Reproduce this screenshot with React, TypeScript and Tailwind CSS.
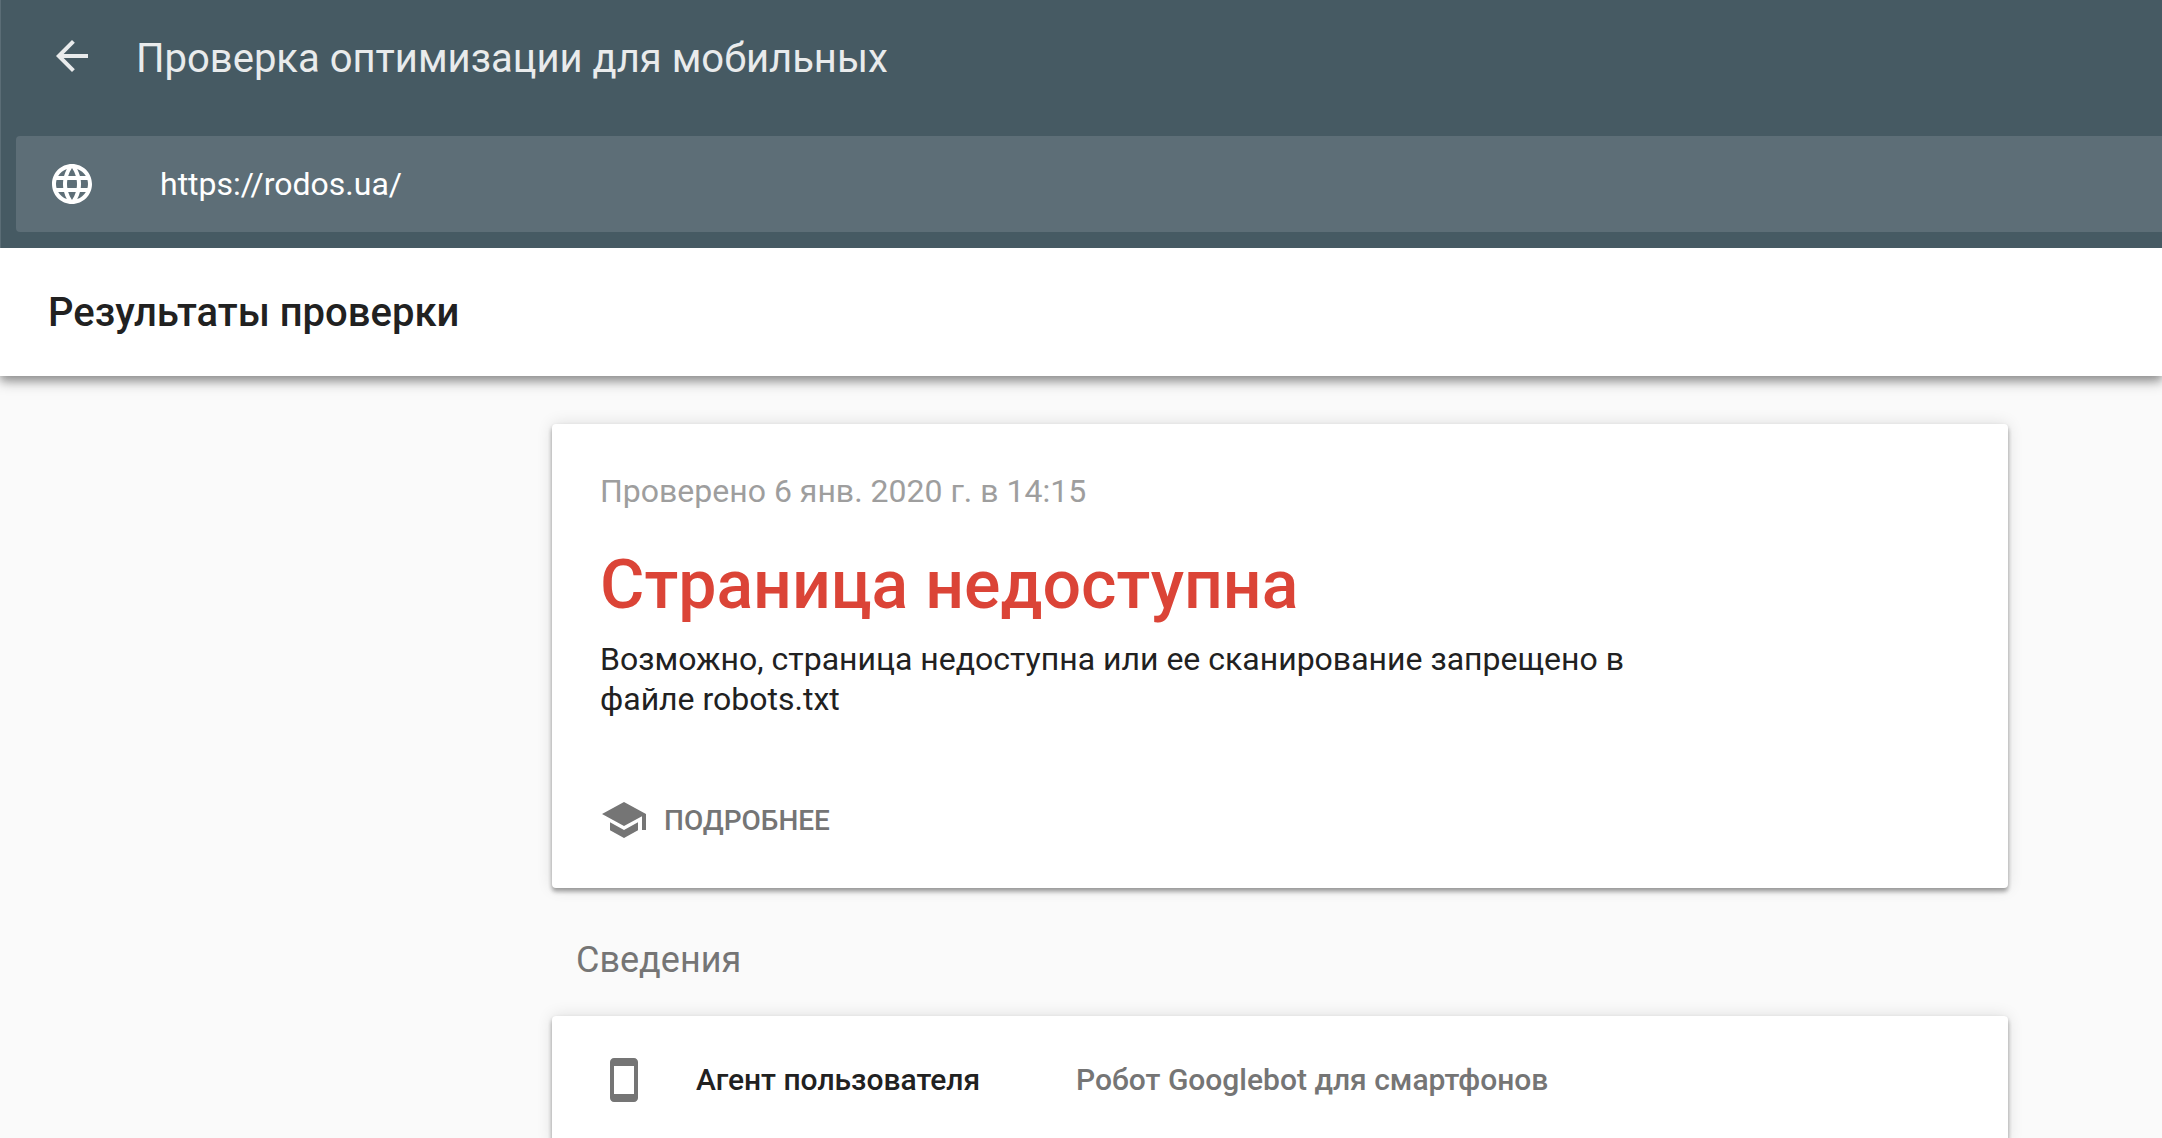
import type { ReactNode } from "react";

function Icon({ children }: { children: ReactNode }) {
  return (
    <svg viewBox="0 0 24 24" fill="currentColor" aria-hidden="true" className="block size-12 shrink-0">
      {children}
    </svg>
  );
}

function Card({ children, className }: { children: ReactNode; className: string }) {
  return (
    <section
      className={`rounded bg-white px-12 shadow-[0_4px_4px_0_rgba(0,0,0,0.24),0_0_16px_0_rgba(0,0,0,0.12),0_2px_4px_0_rgba(0,0,0,0.16)] ${className}`}
    >
      {children}
    </section>
  );
}

function Header() {
  return (
    <header className="relative z-10 bg-[#465a63] pb-4 shadow-[inset_1px_0_#5b6d76]">
      <div className="flex h-34 items-start gap-10 pt-8 pl-12">
        <button type="button" aria-label="Назад" className="text-[#e9ebec]">
          <Icon>
            <path d="M20 11H7.83l5.59-5.59L12 4l-8 8 8 8 1.41-1.41L7.83 13H20v-2z" />
          </Icon>
        </button>
        <h1 className="text-[40px] leading-[54px] text-[#e9ebec]">Проверка оптимизации для мобильных</h1>
      </div>
      <label className="ml-4 flex h-24 items-center gap-16 rounded-l bg-[#5d6e77] pl-8 text-white">
        <Icon>
          <path d="M11.99 2C6.47 2 2 6.48 2 12s4.47 10 9.99 10C17.52 22 22 17.52 22 12S17.52 2 11.99 2zm6.93 6h-2.95c-.32-1.25-.78-2.45-1.38-3.56 1.84.63 3.37 1.91 4.33 3.56zM12 4.04c.83 1.2 1.48 2.53 1.91 3.96h-3.82c.43-1.43 1.08-2.76 1.91-3.96zM4.26 14C4.1 13.36 4 12.69 4 12s.1-1.36.26-2h3.38c-.08.66-.14 1.32-.14 2s.06 1.34.14 2H4.26zm.82 2h2.95c.32 1.25.78 2.45 1.38 3.56-1.84-.63-3.37-1.9-4.33-3.56zm2.95-8H5.08c.96-1.66 2.49-2.93 4.33-3.56C8.81 5.55 8.35 6.75 8.03 8zM12 19.96c-.83-1.2-1.48-2.53-1.91-3.96h3.82c-.43 1.43-1.08 2.76-1.91 3.96zM14.34 14H9.66c-.09-.66-.16-1.32-.16-2s.07-1.35.16-2h4.68c.09.65.16 1.32.16 2s-.07 1.34-.16 2zm.25 5.56c.6-1.11 1.06-2.31 1.38-3.56h2.95c-.96 1.65-2.49 2.93-4.33 3.56zM16.36 14c.08-.66.14-1.32.14-2s-.06-1.34-.14-2h3.38c.16.64.26 1.31.26 2s-.1 1.36-.26 2h-3.38z" />
        </Icon>
        <input
          type="text"
          aria-label="URL"
          defaultValue="https://rodos.ua/"
          className="min-w-0 flex-1 bg-transparent text-[32px] leading-[38px] outline-none"
        />
      </label>
    </header>
  );
}

export default function App() {
  return (
    <div className="flex h-screen flex-col overflow-hidden bg-[#fafafa] font-[Roboto,sans-serif] text-[#212121]">
      <Header />
      <div className="relative bg-white pt-[37px] pb-[35px] pl-12 shadow-[0_6px_12px_0_rgba(0,0,0,0.3),0_4px_8px_0_rgba(0,0,0,0.2)]">
        <h2 className="text-[40px] leading-14 font-medium">Результаты проверки</h2>
      </div>
      <main className="pt-12 pr-[154px] pl-[552px]">
        <Card className="pt-12 pb-11">
          <p className="text-[32px] leading-[38px] text-[#9e9e9e]">Проверено 6 янв. 2020 г. в 14:15</p>
          <h3 className="mt-[35px] text-[68px] leading-20 font-medium text-[#db4437]">Страница недоступна</h3>
          <p className="mt-[14px] max-w-[1040px] text-[32px] leading-10">
            Возможно, страница недоступна или ее сканирование запрещено в файле robots.txt
          </p>
          <a href="#details" className="mt-[77px] flex w-fit items-center gap-4 text-[28px] font-medium text-[#757575]">
            <Icon>
              <path d="M5 13.18v4L12 21l7-3.82v-4L12 17l-7-3.82zM12 3L1 9l11 6 9-4.91V17h2V9L12 3z" />
            </Icon>
            <span className="pt-px leading-10">ПОДРОБНЕЕ</span>
          </a>
        </Card>
        <h3 id="details" className="mt-12 mb-8 pl-6 text-[36px] leading-12 text-[#757575]">
          Сведения
        </h3>
        <Card className="py-10">
          <div className="flex items-center gap-12 text-[#757575]">
            <Icon>
              <path d="M17 1.01L7 1c-1.1 0-2 .9-2 2v18c0 1.1.9 2 2 2h10c1.1 0 2-.9 2-2V3c0-1.1-.9-1.99-2-1.99zM17 19H7V5h10v14z" />
            </Icon>
            <dl className="flex text-[30px] leading-10 font-medium">
              <dt className="w-[380px] text-[#212121]">Агент пользователя</dt>
              <dd>Робот Googlebot для смартфонов</dd>
            </dl>
          </div>
        </Card>
      </main>
    </div>
  );
}
